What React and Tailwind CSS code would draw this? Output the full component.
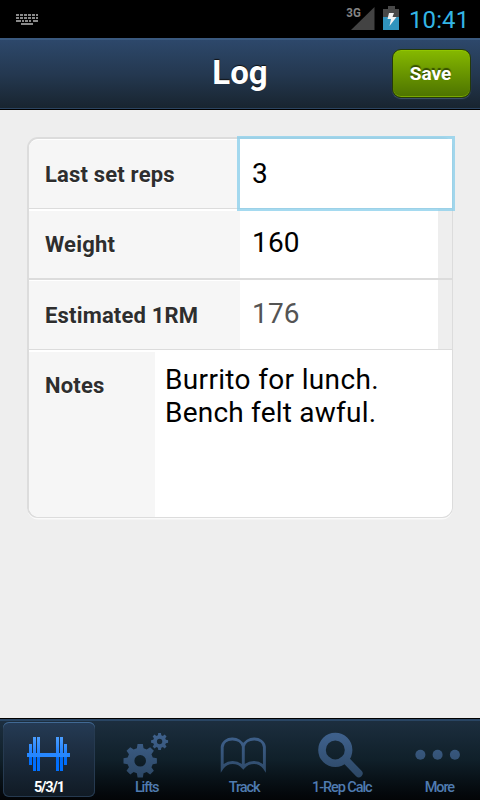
const gearPath = (cx, cy, outer, inner, teeth) => {
  const pts = [];
  const step = (Math.PI * 2) / teeth;
  for (let i = 0; i < teeth; i++) {
    const a = i * step - Math.PI / 2;
    [[-0.33, inner], [-0.2, outer], [0.2, outer], [0.33, inner]].forEach(([o, r]) => {
      pts.push(`${(cx + Math.cos(a + o * step) * r).toFixed(2)},${(cy + Math.sin(a + o * step) * r).toFixed(2)}`);
    });
  }
  return `M${pts.join("L")}Z`;
};

const ring = (cx, cy, r) => `M${cx - r},${cy}a${r},${r} 0 1 0 ${2 * r},0a${r},${r} 0 1 0 ${-2 * r},0Z`;

function Fade({ id, from = "#3e608b", to = "#2a4460" }) {
  return (
    <defs>
      <linearGradient id={id} gradientUnits="userSpaceOnUse" x1="0" y1="4" x2="0" y2="50">
        <stop stopColor={from} />
        <stop offset="1" stopColor={to} />
      </linearGradient>
    </defs>
  );
}

function Barbell() {
  return (
    <svg width="92" height="54" viewBox="0 0 92 54" shapeRendering="crispEdges">
      <defs>
        <linearGradient id="bar" gradientUnits="userSpaceOnUse" x1="0" y1="5" x2="0" y2="39">
          <stop stopColor="#4a9eff" />
          <stop offset="0.5" stopColor="#1f80ff" />
          <stop offset="0.62" stopColor="#006dfa" />
          <stop offset="1" stopColor="#0070ff" />
        </linearGradient>
      </defs>
      <path
        fill="url(#bar)"
        d="M26 12h3v21h-3zM30 5h3v34h-3zM34 5h3v34h-3zM53 5h3v34h-3zM57 5h3v34h-3zM61 12h3v21h-3z"
      />
      <path fill="#2687ff" d="M24 21h43v4H24z" />
    </svg>
  );
}

function Gears() {
  return (
    <svg width="92" height="54" viewBox="0 0 92 54">
      <Fade id="gears" />
      <path fill="url(#gears)" fillRule="evenodd" d={gearPath(39.2, 28.8, 16.9, 13, 8) + ring(39.2, 28.8, 5.8)} />
      <path fill="url(#gears)" fillRule="evenodd" d={gearPath(58.6, 9.5, 8.6, 6.5, 8) + ring(58.6, 9.5, 2.7)} />
    </svg>
  );
}

function Book() {
  return (
    <svg width="92" height="54" viewBox="0 0 92 54">
      <Fade id="book" />
      <path
        fill="none"
        stroke="url(#book)"
        strokeWidth="2.9"
        d="M24.2 36V15C25.3 4.5 42.8 4.5 45.3 14.5C47.8 4.5 65.3 4.5 66.4 15V36C61.3 28.5 50.8 29 45.3 35.5C39.8 29 29.3 28.5 24.2 36ZM45.3 14V36"
      />
    </svg>
  );
}

function Magnifier() {
  return (
    <svg width="92" height="54" viewBox="0 0 92 54">
      <Fade id="glass" />
      <circle cx="39.3" cy="17.9" r="13.3" fill="none" stroke="url(#glass)" strokeWidth="7.6" />
      <path d="M50.3 28.5L62.8 41.5" stroke="url(#glass)" strokeWidth="7.6" strokeLinecap="round" />
    </svg>
  );
}

function Dots() {
  return (
    <svg width="92" height="54" viewBox="0 0 92 54">
      <Fade id="dots" />
      <g fill="url(#dots)">
        <circle cx="27.4" cy="22.7" r="5" />
        <circle cx="44.6" cy="22.7" r="5" />
        <circle cx="61.9" cy="22.7" r="5" />
      </g>
    </svg>
  );
}

const tabs = [
  { label: "5/3/1", Icon: Barbell, active: true },
  { label: "Lifts", Icon: Gears },
  { label: "Track", Icon: Book },
  { label: "1-Rep Calc", Icon: Magnifier },
  { label: "More", Icon: Dots },
];

function StatusBar() {
  return (
    <div className="flex h-[38px] items-start bg-black">
      <svg width="400" height="38" viewBox="0 0 400 38" shapeRendering="crispEdges">
        <g stroke="#8a8a8a" strokeWidth="2" fill="none">
          <path d="M16 15h22" strokeDasharray="3 1" />
          <path d="M16 18h22" strokeDasharray="3 1" />
          <path d="M16 21h5m1 0h2m1 0h3m1 0h2m2 0h5" />
          <path d="M21 24h12" />
        </g>
        <path d="M374.5 7V30H351Z" fill="#434343" shapeRendering="auto" />
        <path d="M388 6h7v3h4v8h-16V9h5z" fill="#484848" />
        <path d="M383 17h16v13h-16z" fill="#3093bd" />
        <path d="M389 13h5l-1.5 4h4l-7 9 1.5-7h-3.5z" fill="#f2f2f2" shapeRendering="auto" />
        <text x="346.3" y="16.5" fill="#858585" fontSize="12" fontWeight="700" textLength="14.5" lengthAdjust="spacingAndGlyphs">
          3G
        </text>
      </svg>
      <span className="ml-[9px] mt-[5px] text-[24px] leading-[30px] tracking-[0.1px] text-[#33b5e5]">10:41</span>
    </div>
  );
}

function Label({ children, className = "" }) {
  return (
    <div className={`shrink-0 bg-[#f6f6f6] pl-4 text-[22px] font-bold tracking-[0.18px] text-[#2e2e2e] [text-shadow:0_1px_1px_#fff] ${className}`}>
      {children}
    </div>
  );
}

export default function App() {
  return (
    <div className="flex h-[800px] w-[480px] flex-col overflow-hidden bg-[#eeeeee] font-['Roboto',sans-serif]">
      <StatusBar />
      <header className="grid h-[72px] shrink-0 grid-cols-[90px_1fr_90px] border-b border-t-2 border-b-black border-t-[#3a597e] bg-linear-to-b from-[#2d486b] via-[#243850] to-[#18242f] shadow-[inset_0_-1px_0_#2c4460]">
        <h1 className="col-start-2 pt-[10px] text-center text-[33px] font-bold leading-[46px] text-white [text-shadow:0_-1px_1px_#111]">
          Log
        </h1>
        <button className="ml-[2px] mt-[9px] h-[49px] w-[79px] rounded-[9px] border border-[#24390a] bg-linear-to-b from-[#86b900] to-[#4d7300] pr-[2px] pt-[2px] text-[19px] font-bold text-white shadow-[0_1px_1px_#42566d,inset_0_1px_0_#91c500,inset_0_-1px_0_#78a800] [text-shadow:0_-2px_1px_#344d00]">
          Save
        </button>
      </header>

      <main className="flex-1 pl-[27px] pt-[27px]">
        <div className="flex h-[381px] w-[426px] flex-col rounded-[11px] border-b border-l-2 border-r border-t-2 border-[#dcdcdc] shadow-[0_2px_0_-0.5px_#fafafa]">
          <div className="flex h-[70px] shrink-0 border-b border-[#dcdcdc]">
            <Label className="w-[211px] rounded-tl-[9px] border-t border-white leading-[70px]">Last set reps</Label>
            <div className="relative w-[212px] bg-white pl-3 text-[28px] leading-[70px] text-black outline-3 outline-[#87ceeb]/75">
              3
            </div>
          </div>
          <div className="flex h-[71px] shrink-0 border-b-2 border-[#dcdcdc]">
            <Label className="w-[211px] border-t-2 border-white leading-[68px]">Weight</Label>
            <div className="w-[198px] bg-white pl-3 text-[28px] leading-[68px] tracking-[0.2px] text-black">160</div>
          </div>
          <div className="flex h-[70px] shrink-0 border-b border-[#dcdcdc]">
            <Label className="w-[211px] border-t border-white leading-[70px]">Estimated 1RM</Label>
            <div className="w-[198px] bg-white pl-3 text-[28px] leading-[68px] tracking-[0.2px] text-[#545454]">176</div>
          </div>
          <div className="flex flex-1 overflow-hidden rounded-b-[10px] bg-white">
            <Label className="w-[126px] border-t-2 border-white leading-[68px]">Notes</Label>
            <div className="whitespace-nowrap pl-[10px] pt-[13px] text-[28px] leading-[33px] text-black">
              <div className="tracking-[0.34px]">Burrito for lunch.</div>
              <div className="tracking-[0.22px]">Bench felt awful.</div>
            </div>
          </div>
        </div>
      </main>

      <nav className="flex h-[82px] shrink-0 gap-[5.6px] border-t border-black bg-linear-to-b from-[#1d2f40] via-[#10202a] to-[#030507] pl-[3px] pt-[3px] shadow-[inset_0_2px_0_#294563]">
        {tabs.map(({ label, Icon, active }) => (
          <div
            key={label}
            className={`flex h-[75px] w-[92px] shrink-0 flex-col items-center rounded-[6px] pt-[10px] ${
              active
                ? "bg-linear-to-b from-[#253b55] to-[#101a24] font-bold text-white shadow-[inset_0_1px_0_#416994,inset_0_0_0_1px_#263a50]"
                : "font-medium text-[#4f7bb0]"
            }`}
          >
            <Icon />
            <span className="mt-[-7px] whitespace-nowrap text-[14.5px] leading-[18px] tracking-[-1.1px]">{label}</span>
          </div>
        ))}
      </nav>
    </div>
  );
}
